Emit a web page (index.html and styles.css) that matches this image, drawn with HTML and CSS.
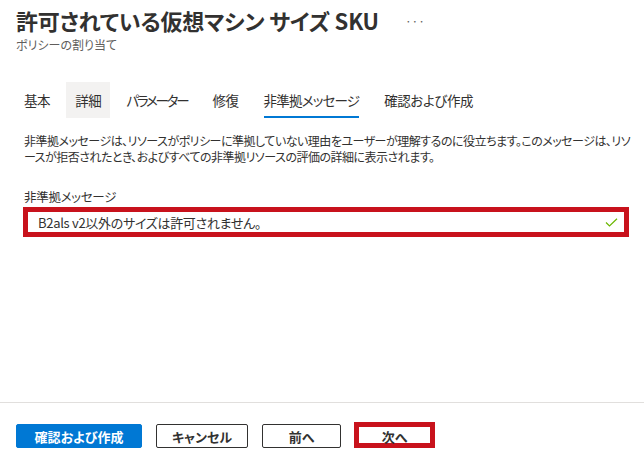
FILE: index.html
```html
<!DOCTYPE html>
<html lang="ja">
  <head>
    <meta charset="UTF-8" />
    <meta name="viewport" content="width=device-width, initial-scale=1.0" />
    <title>ポリシーの割り当て</title>
    <link rel="stylesheet" href="styles.css">
  </head>
  <body>
    <div class="page">
      <div class="header">
        <div class="title-row">
          <h1>許可されている仮想マシン サイズ SKU</h1>
          <span class="more">···</span>
        </div>
        <div class="subtitle">ポリシーの割り当て</div>
      </div>

      <div class="tabs">
        <div class="tab">基本</div>
        <div class="tab hover">詳細</div>
        <div class="tab narrow">パラメーター</div>
        <div class="tab">修復</div>
        <div class="tab active">非準拠メッセージ</div>
        <div class="tab">確認および作成</div>
      </div>

      <div class="content">
        <p class="desc">
          非準拠メッセージは、リソースがポリシーに準拠していない理由をユーザーが理解するのに役立ちます。このメッセージは、リソースが拒否されたとき、およびすべての非準拠リソースの評価の詳細に表示されます。
        </p>

        <label class="field-label">非準拠メッセージ</label>
        <div class="input highlight">
          <span class="input-text">B2als v2以外のサイズは許可されません。</span>
          <svg class="check" width="13" height="9" viewBox="0 0 13 9">
            <path d="M1 4.5 L4.5 8 L12 0.8" fill="none" stroke="#6bb700" stroke-width="1.2" />
          </svg>
        </div>
      </div>

      <div class="footer">
        <button class="btn primary">確認および作成</button>
        <button class="btn cancel">キャンセル</button>
        <button class="btn prev">前へ</button>
        <button class="btn next highlight">次へ</button>
      </div>
    </div>
  </body>
</html>
```

FILE: styles.css
```css
* {
  box-sizing: border-box;
}
body {
  margin: 0;
  padding: 0;
  background: white;
  color: #323130;
  font-family: "Noto Sans CJK JP", "Noto Sans", sans-serif;
  font-feature-settings: "palt" 1;
}
.page {
  display: flex;
  flex-direction: column;
  min-height: 100vh;
}
.header {
  padding: 4px 16px 0;
}
.title-row {
  display: flex;
  align-items: center;
}
h1 {
  margin: 0;
  font-size: 22px;
  line-height: 32px;
  font-weight: 600;
  letter-spacing: -0.2px;
  color: #323130;
}
.more {
  margin-left: 26px;
  font-size: 12px;
  color: #605e5c;
}
.subtitle {
  margin-top: 1px;
  font-size: 12px;
  line-height: 16px;
  color: #605e5c;
}
.tabs {
  display: flex;
  gap: 7px;
  margin-top: 29px;
  padding-left: 15px;
  height: 36px;
}
.tab {
  position: relative;
  display: flex;
  align-items: center;
  padding: 0 9px;
  font-size: 13.5px;
  letter-spacing: -0.4px;
  color: #323130;
}
.tab.narrow {
  letter-spacing: -2.2px;
}
.tab.active {
  letter-spacing: -0.8px;
}
.tab.hover {
  background: #f3f2f1;
}
.tab.active::after {
  content: "";
  position: absolute;
  left: 9px;
  right: 9px;
  bottom: 0;
  height: 2px;
  background: #0078d4;
}
.content {
  flex: 1;
  padding: 0 12px 0 24px;
}
.desc {
  margin: 15px 0 0;
  font-size: 12px;
  line-height: 16px;
  letter-spacing: -0.5px;
}
.field-label {
  display: block;
  margin-top: 24px;
  font-size: 12.5px;
  line-height: 16px;
  letter-spacing: -0.3px;
}
.input {
  display: flex;
  align-items: center;
  justify-content: space-between;
  margin: 2px 0 0 -1px;
  width: 606px;
  height: 30px;
  padding: 0 6px 0 5px;
  font-size: 13px;
  letter-spacing: -0.3px;
}
.input-text {
  padding-left: 5px;
}
.highlight {
  border: 5px solid #c8121c;
}
.check {
  margin-top: 1px;
}
.footer {
  display: flex;
  gap: 14px;
  border-top: 1px solid #e1dfdd;
  padding: 21px 16px 15px;
}
.btn {
  height: 24px;
  padding: 0;
  border: 1px solid #323130;
  border-radius: 2px;
  background: white;
  color: #323130;
  font-family: inherit;
  font-feature-settings: "palt" 1;
  font-size: 13px;
  font-weight: 600;
}
.btn.primary {
  width: 126px;
  background: #0078d4;
  border-color: #0078d4;
  color: white;
}
.btn.cancel {
  width: 92px;
}
.btn.prev {
  width: 79px;
}
.btn.next {
  width: 81px;
  height: 26px;
  margin-top: -2px;
  margin-left: -1px;
  border: 5px solid #c8121c;
  border-radius: 0;
}
```
